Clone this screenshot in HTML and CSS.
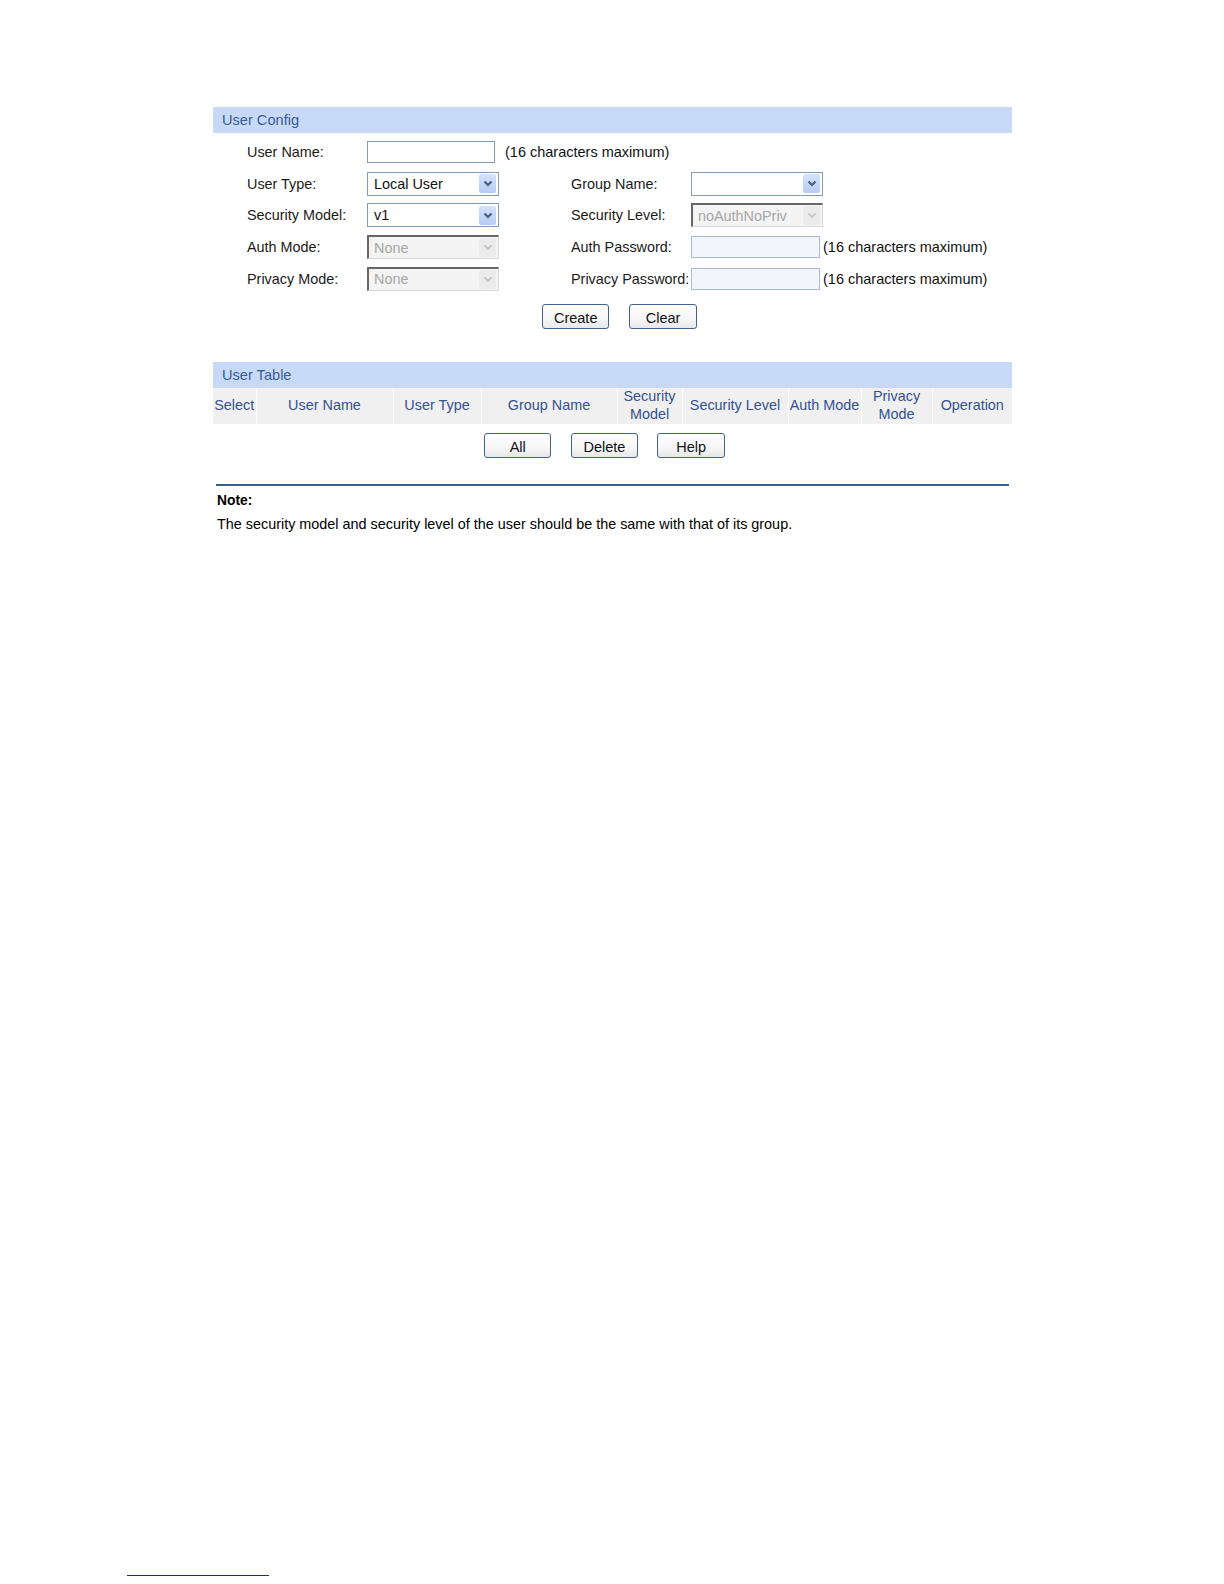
FILE: index.html
```html
<!DOCTYPE html>
<html>
<head>
<meta charset="utf-8">
<link rel="stylesheet" href="styles.css">
</head>
<body>
<div class="page">
  <div class="content">
    <div class="bar">User Config</div>
    <div class="form">
      <div class="lbl">User Name:</div>
      <div class="span3"><div class="input"></div><span class="hint">(16 characters maximum)</span></div>

      <div class="lbl">User Type:</div>
      <div class="ctl"><div class="select"><span class="val">Local User</span><span class="arrow"><svg width="10" height="7" viewBox="0 0 10 7"><path d="M1.5 1.5 L5 5 L8.5 1.5" fill="none" stroke="#4a5f86" stroke-width="2.2"/></svg></span></div></div>
      <div class="lbl">Group Name:</div>
      <div class="ctl"><div class="select"><span class="val"></span><span class="arrow"><svg width="10" height="7" viewBox="0 0 10 7"><path d="M1.5 1.5 L5 5 L8.5 1.5" fill="none" stroke="#4a5f86" stroke-width="2.2"/></svg></span></div></div>

      <div class="lbl">Security Model:</div>
      <div class="ctl"><div class="select"><span class="val">v1</span><span class="arrow"><svg width="10" height="7" viewBox="0 0 10 7"><path d="M1.5 1.5 L5 5 L8.5 1.5" fill="none" stroke="#4a5f86" stroke-width="2.2"/></svg></span></div></div>
      <div class="lbl">Security Level:</div>
      <div class="ctl"><div class="select disabled"><span class="val">noAuthNoPriv</span><span class="arrow"><svg width="10" height="7" viewBox="0 0 10 7"><path d="M1.5 1.5 L5 5 L8.5 1.5" fill="none" stroke="#c6c6c6" stroke-width="1.8"/></svg></span></div></div>

      <div class="lbl">Auth Mode:</div>
      <div class="ctl"><div class="select disabled"><span class="val">None</span><span class="arrow"><svg width="10" height="7" viewBox="0 0 10 7"><path d="M1.5 1.5 L5 5 L8.5 1.5" fill="none" stroke="#c6c6c6" stroke-width="1.8"/></svg></span></div></div>
      <div class="lbl">Auth Password:</div>
      <div class="ctl"><div class="input dis"></div><span class="hint tight">(16 characters maximum)</span></div>

      <div class="lbl">Privacy Mode:</div>
      <div class="ctl"><div class="select disabled"><span class="val">None</span><span class="arrow"><svg width="10" height="7" viewBox="0 0 10 7"><path d="M1.5 1.5 L5 5 L8.5 1.5" fill="none" stroke="#c6c6c6" stroke-width="1.8"/></svg></span></div></div>
      <div class="lbl">Privacy Password:</div>
      <div class="ctl"><div class="input dis"></div><span class="hint tight">(16 characters maximum)</span></div>
    </div>
    <div class="btns btns-form">
      <button class="btn">Create</button>
      <button class="btn">Clear</button>
    </div>

    <div class="bar">User Table</div>
    <table class="tbl">
      <colgroup>
        <col class="c1"><col class="c2"><col class="c3"><col class="c4"><col class="c5"><col class="c6"><col class="c7"><col class="c8"><col class="c9">
      </colgroup>
      <tr>
        <th>Select</th>
        <th>User Name</th>
        <th>User Type</th>
        <th>Group Name</th>
        <th>Security<br>Model</th>
        <th>Security Level</th>
        <th>Auth Mode</th>
        <th>Privacy<br>Mode</th>
        <th>Operation</th>
      </tr>
    </table>
    <div class="btns btns-table">
      <button class="btn">All</button>
      <button class="btn">Delete</button>
      <button class="btn">Help</button>
    </div>

    <div class="note">
      <div class="note-title">Note:</div>
      <div class="note-text">The security model and security level of the user should be the same with that of its group.</div>
    </div>
  </div>
  <div class="footline"></div>
</div>
</body>
</html>
```
FILE: styles.css
```css
html, body {
  margin: 0;
  padding: 0;
  background: #ffffff;
}
.page {
  height: 1584px;
  display: flex;
  flex-direction: column;
  font-family: "Liberation Sans", Arial, sans-serif;
  font-size: 14.4px;
  color: #111;
}
.content {
  margin-left: 213px;
  width: 799px;
  padding-top: 107px;
}
.bar {
  height: 25.5px;
  line-height: 27px;
  background: #c6daf7;
  color: #3b5a94;
  padding-left: 9px;
  font-size: 14.6px;
}
.form {
  display: grid;
  grid-template-columns: 120px 204px 120px 1fr;
  grid-auto-rows: 31.7px;
  padding-left: 34px;
  padding-top: 3.6px;
}
.lbl {
  display: flex;
  align-items: center;
  white-space: nowrap;
  color: #1a1a1a;
}
.ctl, .span3 {
  display: flex;
  align-items: center;
}
.span3 {
  grid-column: 2 / span 3;
}
.input {
  width: 126px;
  height: 20px;
  border: 1px solid #7f9db9;
  background: #fff;
}
.input.dis {
  width: 127px;
  background: #f2f5fb;
  border-color: #a9b9d0;
}
.hint {
  margin-left: 10px;
  white-space: nowrap;
  font-size: 14.5px;
}
.hint.tight {
  margin-left: 3px;
}
.select {
  width: 130px;
  height: 22px;
  border: 1px solid #7f9db9;
  background: #fff;
  display: flex;
  align-items: center;
  justify-content: space-between;
}
.select .val {
  padding-left: 6px;
  white-space: nowrap;
}
.select .arrow {
  width: 17px;
  height: 19px;
  margin-right: 2px;
  border-radius: 2px;
  background: linear-gradient(#d5e2fb, #b7cbf5);
  display: flex;
  align-items: center;
  justify-content: center;
}
.select.disabled {
  border: 1px solid #d8d8d8;
  border-top: 2px solid #676767;
  border-left: 2px solid #676767;
  height: 21px;
  width: 129px;
  background: #f4f4f4;
  color: #a6a6a6;
}
.select.disabled .val {
  padding-left: 5px;
}
.select.disabled .arrow {
  background: #ebebeb;
}
.btns {
  display: flex;
  gap: 20px;
}
.btns-form {
  padding-left: 329px;
  margin-top: 9.8px;
  margin-bottom: 33.3px;
}
.btns-table {
  padding-left: 271px;
  gap: 19.3px;
  margin-top: 9.8px;
}
.btn {
  width: 67.4px;
  height: 24.5px;
  border: 1px solid #44628a;
  border-radius: 3px;
  background: linear-gradient(#ffffff, #f6f6f6 60%, #e8e8e8);
  font-family: "Liberation Sans", Arial, sans-serif;
  font-size: 14.5px;
  color: #111;
  padding: 4px 0 0 0;
  line-height: 19px;
}
.tbl {
  width: 799px;
  border-collapse: collapse;
  table-layout: fixed;
}
.tbl th {
  height: 36px;
  padding: 0;
  background: #f0f0f0;
  color: #35518f;
  font-weight: normal;
  font-size: 14.4px;
  line-height: 17.2px;
  text-align: center;
  border-left: 1px solid #fbfbfb;
  white-space: nowrap;
}
.tbl th:first-child {
  border-left: none;
}
.c1 { width: 43px; }
.c2 { width: 137px; }
.c3 { width: 88px; }
.c4 { width: 136px; }
.c5 { width: 65px; }
.c6 { width: 106px; }
.c7 { width: 73px; }
.c8 { width: 71px; }
.c9 { width: 80px; }
.note {
  margin-top: 26.5px;
  margin-left: 3px;
  margin-right: 3px;
  border-top: 2px solid #33608f;
  padding-left: 1px;
  color: #000;
}
.note-title {
  font-weight: bold;
  font-size: 13.8px;
  margin-top: 6.4px;
  line-height: 16px;
}
.note-text {
  font-size: 14.4px;
  margin-top: 7px;
  line-height: 17px;
}
.footline {
  margin-top: auto;
  margin-bottom: 8px;
  margin-left: 127px;
  width: 142px;
  height: 1px;
  background: #1c2a7c;
}
```
